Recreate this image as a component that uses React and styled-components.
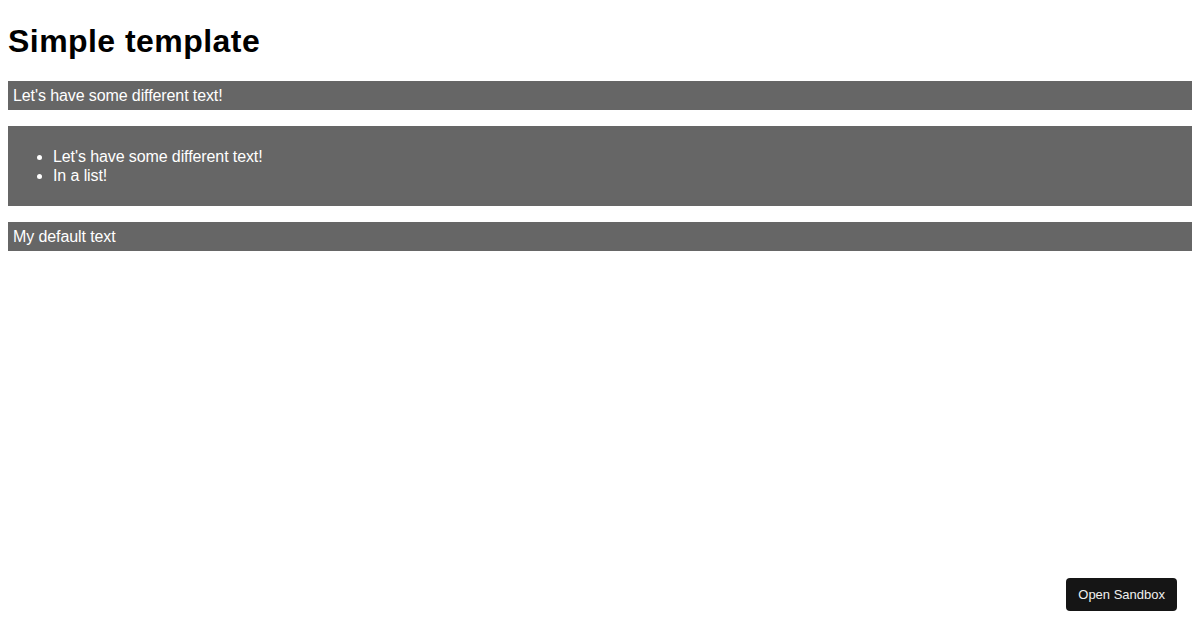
import styled, { createGlobalStyle } from "styled-components";

const GlobalStyle = createGlobalStyle`
  body {
    margin: 8px;
    font-family: "Liberation Sans", Arial, sans-serif;
    background: #fff;
    color: #000;
  }
`;

const Title = styled.h1`
  font-size: 32px;
  font-weight: 700;
  margin: 14px 0 21px;
  line-height: 38px;
  letter-spacing: 0.45px;
`;

const Block = styled.div`
  background: #666;
  color: #fff;
  padding: 5px;
  margin: 16px 0;
  font-size: 16px;
  line-height: 19px;
  letter-spacing: -0.1px;
`;

const List = styled.ul`
  margin: 16px 0;
  padding-left: 40px;
`;

const SandboxButton = styled.button`
  position: fixed;
  right: 23px;
  bottom: 19px;
  height: 33px;
  padding: 0 12px;
  border: none;
  border-radius: 4px;
  background: #151515;
  color: #f0f0f0;
  font-family: "Liberation Sans", Arial, sans-serif;
  font-size: 13px;
  cursor: pointer;
`;

const App = () => {
  return (
    <>
      <GlobalStyle />
      <Title>Simple template</Title>
      <Block>Let's have some different text!</Block>
      <Block>
        <List>
          <li>Let's have some different text!</li>
          <li>In a list!</li>
        </List>
      </Block>
      <Block>My default text</Block>
      <SandboxButton>Open Sandbox</SandboxButton>
    </>
  );
};

export default App;
